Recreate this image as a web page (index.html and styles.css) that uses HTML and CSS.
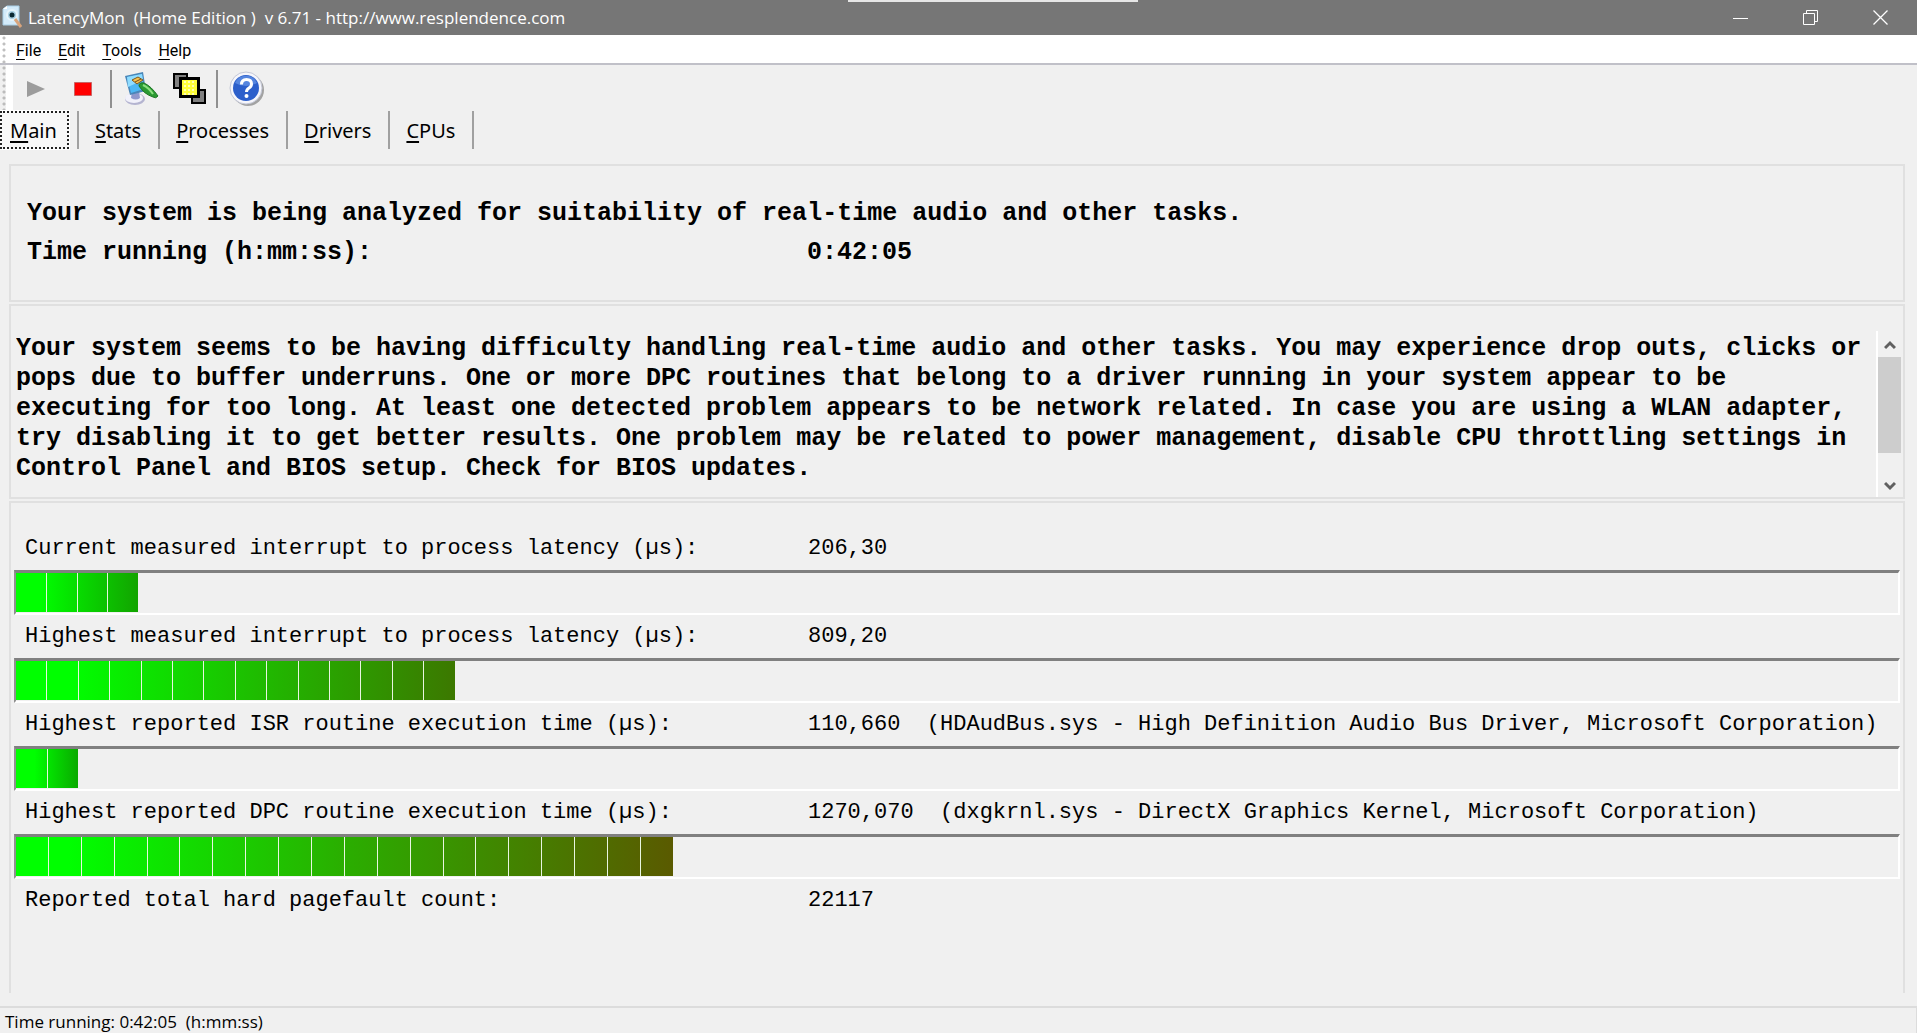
FILE: index.html
```html
<!DOCTYPE html>
<html lang="en">
<head>
  <meta charset="utf-8">
  <title>LatencyMon</title>
  <link rel="stylesheet" href="styles.css">
</head>
<body>
<div id="window">
  <header class="titlebar">
    <svg class="app-icon" width="20" height="26" viewBox="0 0 20 26">
      <path d="M1 4l4-3h12v19H1z" fill="#d3ebfa" stroke="#a9cfe6"/>
      <path d="M1 4l4-3v3z" fill="#fff"/>
      <circle cx="10" cy="10" r="5" fill="#a8cfe2" stroke="#e6f4fb" stroke-width="2"/>
      <circle cx="10" cy="10" r="2.500" fill="#0d2a33"/>
      <path d="M13 14l6 8" stroke="#d8a47c" stroke-width="3"/>
    </svg>
    <h1>LatencyMon&nbsp; (Home Edition )&nbsp; v 6.71 - http://www.resplendence.com</h1>
    <div class="win-buttons">
      <button aria-label="Minimize"><svg width="16" height="16"><path d="M0 8.500h15" stroke="#fff"/></svg></button>
      <button aria-label="Restore"><svg width="16" height="16" fill="none" stroke="#fff"><path d="M.5 3.500h11v11H.5zM3.500 3V.5h11v11H12"/></svg></button>
      <button aria-label="Close"><svg width="16" height="16"><path d="M.5.5l14 14M14.500.5l-14 14" stroke="#fff" stroke-width="1.300"/></svg></button>
    </div>
    <div class="drag-bar"></div>
  </header>

  <nav class="menubar">
    <button><u>F</u>ile</button>
    <button><u>E</u>dit</button>
    <button><u>T</u>ools</button>
    <button><u>H</u>elp</button>
  </nav>

  <div class="toolbar">
    <div class="toolgroup">
      <button aria-label="Start" disabled><svg width="20" height="18"><path d="M1 1l18 8-18 8z" fill="#9c9c9c"/></svg></button>
      <button aria-label="Stop"><svg width="20" height="16"><path d="M1.500 1.500h17v13h-17z" fill="#f00" stroke="#c86464"/></svg></button>
    </div>
    <div class="toolgroup">
      <button aria-label="Options">
        <svg width="36" height="36" viewBox="0 0 36 36">
          <ellipse cx="12" cy="28" rx="10" ry="6" fill="#b4b4d0"/>
          <ellipse cx="11" cy="27" rx="9" ry="5" fill="#f1f1fa"/>
          <path d="M9 20h7l1 7q-4 3-9 0z" fill="#8f98cc"/>
          <path d="M2 5l18-4 3 19-16 4z" fill="#4a86b8"/>
          <path d="M4 6l15-3 2 15-13 4z" fill="#4db8f4"/>
          <path d="M4 6l15-3 1 6-15 7z" fill="#8fdcff"/>
          <path d="M9 9l6-3 5 3-6 4z" fill="#f2c14e" stroke="#80561a"/>
          <path d="M12 11l6-3" stroke="#7b4a12"/>
          <path d="M16 15q0-4 5-3 7 3 14 13-2 3-5 1-9-3-14-11z" fill="#2a9a32" stroke="#1d7424"/>
          <path d="M20 14q6 3 10 9" fill="none" stroke="#8be07f" stroke-width="2"/>
        </svg>
      </button>
      <button aria-label="Windows">
        <svg width="36" height="34" viewBox="0 0 36 34" stroke="#000" stroke-width="2">
          <path d="M2 2h13v14H2z" fill="#808080"/>
          <path d="M20 18h13v13H20z" fill="#808080"/>
          <path d="M8.500 6.500h18v18h-18z" fill="#ffff3a" stroke-width="3"/>
          <path d="M12 10h12M12 14h12M12 18h12M12 22h12" stroke="#ffffb8" stroke-dasharray="2 2"/>
        </svg>
      </button>
    </div>
    <div class="toolgroup">
      <button aria-label="Help">
        <svg width="36" height="36" viewBox="0 0 36 36">
          <circle cx="19" cy="19" r="16" fill="#a2a2a2"/>
          <circle cx="17" cy="17" r="16" fill="#f6f6fb" stroke="#c3c7d6"/>
          <circle cx="17" cy="17" r="13" fill="#2c5fcb"/>
          <path d="M6 12a12 12 0 0 1 22 0q-11 6-22 0z" fill="#5585df"/>
          <path d="M12.500 13.500q0-5 5-5t5 4.500q0 2.500-2.500 4t-2.500 4" fill="none" stroke="#fff" stroke-width="3"/>
          <circle cx="17.500" cy="25" r="2" fill="#fff"/>
        </svg>
      </button>
    </div>
  </div>

  <div class="tabs" role="tablist">
    <div class="tab"><button class="active" role="tab" aria-selected="true"><u>M</u>ain</button></div>
    <div class="tab"><button role="tab"><u>S</u>tats</button></div>
    <div class="tab"><button role="tab"><u>P</u>rocesses</button></div>
    <div class="tab"><button role="tab"><u>D</u>rivers</button></div>
    <div class="tab"><button role="tab"><u>C</u>PUs</button></div>
  </div>

  <main>
    <section class="panel summary">
      <p>Your system is being analyzed for suitability of real-time audio and other tasks.</p>
      <p class="pair"><span>Time running (h:mm:ss):</span><span>0:42:05</span></p>
    </section>

    <section class="panel report">
      <textarea readonly aria-label="Report">Your system seems to be having difficulty handling real-time audio and other tasks. You may experience drop outs, clicks or pops due to buffer underruns. One or more DPC routines that belong to a driver running in your system appear to be executing for too long. At least one detected problem appears to be network related. In case you are using a WLAN adapter, try disabling it to get better results. One problem may be related to power management, disable CPU throttling settings in Control Panel and BIOS setup. Check for BIOS updates.</textarea>
      <div class="scrollbar">
        <svg width="12" height="10"><path d="M1 8l5-5 5 5" fill="none" stroke="#606060" stroke-width="3"/></svg>
        <div class="track"><div class="thumb"></div></div>
        <svg width="12" height="10"><path d="M1 2l5 5 5-5" fill="none" stroke="#606060" stroke-width="3"/></svg>
      </div>
    </section>

    <section class="panel metrics">
      <p class="pair"><span>Current measured interrupt to process latency (µs):</span><span>206,30</span></p>
      <div class="bar"><div class="fill f1" style="width:6.5%"><i></i><i></i><i></i><i></i></div></div>

      <p class="pair"><span>Highest measured interrupt to process latency (µs):</span><span>809,20</span></p>
      <div class="bar"><div class="fill f2" style="width:23.3%"><i></i><i></i><i></i><i></i><i></i><i></i><i></i><i></i><i></i><i></i><i></i><i></i><i></i><i></i></div></div>

      <p class="pair"><span>Highest reported ISR routine execution time (µs):</span><span>110,660&nbsp; (HDAudBus.sys - High Definition Audio Bus Driver, Microsoft Corporation)</span></p>
      <div class="bar"><div class="fill f3" style="width:3.3%"><i></i><i></i></div></div>

      <p class="pair"><span>Highest reported DPC routine execution time (µs):</span><span>1270,070&nbsp; (dxgkrnl.sys - DirectX Graphics Kernel, Microsoft Corporation)</span></p>
      <div class="bar"><div class="fill f4" style="width:34.9%"><i></i><i></i><i></i><i></i><i></i><i></i><i></i><i></i><i></i><i></i><i></i><i></i><i></i><i></i><i></i><i></i><i></i><i></i><i></i><i></i></div></div>

      <p class="pair"><span>Reported total hard pagefault count:</span><span>22117</span></p>
    </section>
  </main>

  <footer class="statusbar">Time running: 0:42:05&nbsp; (h:mm:ss)</footer>
</div>
</body>
</html>
```

FILE: styles.css
```css
* {
  box-sizing: border-box;
}
body {
  margin: 0;
  background: #f0f0f0;
  color: #000;
  font-family: "Open Sans", "Noto Sans", sans-serif;
}
button {
  border: none;
  background: none;
  padding: 0;
  color: inherit;
  font: inherit;
}
svg {
  display: block;
}
p, h1 {
  margin: 0;
}
u {
  text-underline-offset: 3px;
}
#window {
  display: flex;
  flex-direction: column;
  min-height: 100vh;
}

/* title bar */
.titlebar {
  position: relative;
  display: flex;
  align-items: center;
  height: 35px;
  background: #767676;
  color: #fff;
}
.app-icon {
  margin: 0 6px 0 2px;
}
.titlebar h1 {
  flex: 1;
  font-size: 17px;
  font-weight: 400;
}
.win-buttons {
  display: flex;
  margin-right: 1px;
}
.win-buttons button {
  display: flex;
  align-items: center;
  justify-content: center;
  width: 70px;
  height: 34px;
}
/* handle hanging from the top edge */
.drag-bar {
  position: absolute;
  top: 0;
  left: 50%;
  width: 290px;
  height: 2px;
  margin-left: -111px;
  background: #e6e6e6;
}

/* menu and toolbar, each with a dotted grip on the left */
.menubar {
  display: flex;
  gap: 17px;
  height: 30px;
  padding: 2px 0 0 16px;
  border-bottom: 2px solid #c0c0c8;
  background: radial-gradient(circle at 4px 3px, #c0c0c0 1px, #fff 2px) left top / 10px 6px repeat-y #fff;
  font-family: Roboto, sans-serif;
  font-size: 16px;
}
.toolbar {
  display: flex;
  height: 46px;
  padding: 5px 0 3px;
  background:
    radial-gradient(circle at 4px 3px, #bcbcbc 1px, transparent 2px) left top / 7px 6px repeat-y,
    linear-gradient(to right, #f0f0f0 6px, #fff 6px, #fff 13px, #f0f0f0 13px);
}
.toolgroup {
  display: flex;
  align-items: center;
  gap: 13px;
  padding: 0 8px 0 11px;
  border-right: 2px solid #909090;
}
.toolgroup:first-child {
  gap: 27px;
  padding: 0 17px 0 26px;
}
.toolgroup:last-child {
  border: none;
}

/* tabs */
.tabs {
  display: flex;
  height: 38px;
  font-family: "Noto Sans", sans-serif;
  font-size: 20px;
}
.tab {
  display: flex;
  padding: 0 17px 0 16px;
  border-right: 2px solid #a0a0a0;
}
.tab:first-child {
  padding: 0 8px 0 0;
}
.tab button.active {
  padding: 0 10px 0 8px;
  border: 2px dotted #222;
  outline: 1px solid #fff;
  background: #f8f8f8;
}

/* panels */
main {
  flex: 1;
  display: flex;
  flex-direction: column;
  gap: 2px;
  padding: 15px 12px 13px 9px;
  font-family: "Liberation Mono", monospace;
}
.panel {
  border: 2px solid #e0e0e0;
}
.pair {
  display: grid;
  grid-template-columns: 780px 1fr;
  white-space: nowrap;
}
.summary {
  padding: 28px 16px;
  font-size: 25px;
  font-weight: 700;
  line-height: 39px;
}
.report {
  display: flex;
  padding: 25px 2px 0 5px;
}
.report textarea {
  flex: 1;
  height: 164px;
  padding: 3px 8px 0 0;
  border: none;
  outline: none;
  resize: none;
  overflow: hidden;
  background: none;
  color: #000;
  font: 700 25px/30px "Liberation Mono", monospace;
}
.scrollbar {
  display: flex;
  flex-direction: column;
  align-items: center;
  justify-content: space-between;
  width: 25px;
  padding: 9px 0 6px;
  border-left: 2px solid #fff;
}
.track {
  flex: 1;
  align-self: stretch;
  padding: 7px 0 28px;
}
.thumb {
  height: 96px;
  background: #cdcdcd;
}
.metrics {
  flex: 1;
  padding: 24px 3px 0;
  border-bottom: none;
  font-size: 22px;
}
.metrics .pair {
  grid-template-columns: 783px 1fr;
  padding-left: 11px;
  line-height: 43px;
}

/* level bars */
.bar {
  height: 45px;
  border-style: solid;
  border-width: 3px 2px 2px;
  border-color: #808080 #fff #fff #909090;
}
.fill {
  display: flex;
  height: 39px;
}
.fill i {
  flex: 1;
  border-right: 1px solid #e8f5e0;
}
.fill i:last-child {
  border: none;
}
.f1 {
  background: linear-gradient(to right, #0f0 20%, #12a400);
}
.f2 {
  background: linear-gradient(to right, #0f0 12%, #22b400 60%, #3c7800);
}
.f3 {
  background: linear-gradient(to right, #0f0 30%, #0aaa00);
}
.f4 {
  background: linear-gradient(to right, #0f0 8%, #2aae00 50%, #5a5a00);
}

.statusbar {
  height: 27px;
  padding-left: 5px;
  border-top: 2px solid #dcdcdc;
  border-right: 1px solid #dcdcdc;
  font-size: 17px;
  line-height: 27px;
}
```
